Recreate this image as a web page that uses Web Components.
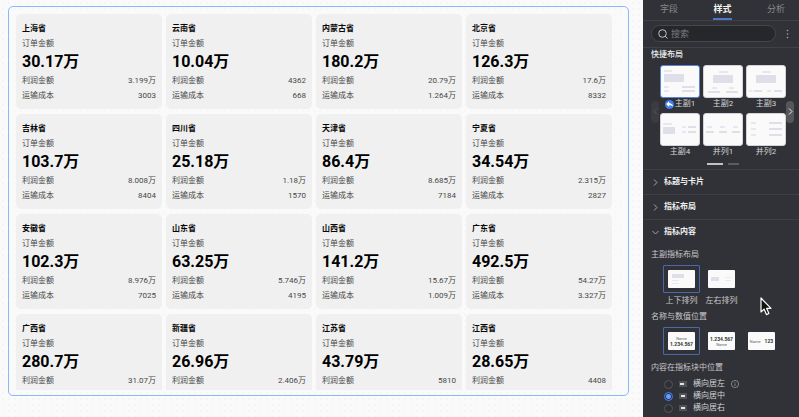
<!DOCTYPE html>
<html lang="zh-CN">
<head>
<meta charset="utf-8">
<meta name="viewport" content="width=device-width, initial-scale=1">
<title>指标卡编辑</title>
<style>
  html, body { margin: 0; height: 100%; }
  body { background: #fafafa; font: 8px/12px Roboto, "Noto Sans CJK SC", sans-serif; overflow: hidden; }
</style>
</head>
<body>
<dashboard-editor></dashboard-editor>

<template id="t-editor">
  <style>
    :host { display: flex; height: 100vh; }
    main { flex: 1; min-width: 0; box-sizing: border-box; padding: 6px 14px 21px 8px;
      background: radial-gradient(circle at 3px 3px, #f5f5f5 0 1px, transparent 1px) 0 0 / 6px 6px #fafafa; }
    side-panel { flex: none; width: 156px; }
    .pointer { position: absolute; left: 760px; top: 297px; width: 12px; height: 19px; }
  </style>
  <main><kpi-board></kpi-board></main>
  <side-panel></side-panel>
  <svg class="pointer" viewBox="0 0 12 19" aria-hidden="true"><path d="M1 1v14l3.1-2.9 2.3 5.5 2.5-1.1-2.3-5.2H11z" fill="#111" stroke="#fff" stroke-width="1.2" stroke-linejoin="round"/></svg>
</template>

<template id="t-board">
  <style>
    :host { display: block; height: 100%; box-sizing: border-box; border: 1px solid #8cb8fb; border-radius: 5px; padding: 7px 16px 5px 7px; background: #fafafa88; }
    .view { height: 100%; overflow: hidden; }
    .grid { display: grid; grid-template-columns: repeat(4, 1fr); grid-auto-rows: 95px; gap: 5px 4px; }
  </style>
  <div class="view"><div class="grid"></div></div>
</template>

<template id="t-card">
  <style>
    :host { display: block; box-sizing: border-box; padding: 8px 6px 6px; border-radius: 5px; background: #f0f0f0; color: #484848; }
    h3, p, dl, dt, dd { margin: 0; }
    h3 { font-size: 8px; line-height: 14px; font-weight: 700; color: #080808; }
    p { line-height: 16px; }
    .total { font-size: 16px; line-height: 20px; font-weight: 700; color: #000; }
    dl { padding-top: 1px; }
    dl div { display: flex; justify-content: space-between; line-height: 15px; }
  </style>
  <h3><slot name="name"></slot></h3>
  <p>订单金额</p>
  <p class="total"><slot name="total"></slot></p>
  <dl>
    <div><dt>利润金额</dt><dd><slot name="profit"></slot></dd></div>
    <div class="cost"><dt>运输成本</dt><dd><slot name="cost"></slot></dd></div>
  </dl>
</template>

<template id="t-tile">
  <style>
    :host { display: block; }
    button { all: unset; display: block; width: 100%; color: #d4d4d6; text-align: center; cursor: pointer; }
    .art { display: block; box-sizing: border-box; height: 33px; border: 1px solid #d4d4d8; border-radius: 3px; background: #fafafa; }
    :host([selected]) .art { border-color: #5a83d6; }
    svg { display: block; width: 100%; height: 100%; }
    .label { display: flex; align-items: center; justify-content: center; gap: 1px; line-height: 12px; white-space: nowrap; }
    .label svg { display: none; width: 9px; height: 9px; }
    :host([selected]) .label svg { display: block; }
  </style>
  <button type="button"><span class="art"></span><span class="label"><svg viewBox="0 0 8 8" aria-hidden="true"><circle cx="4" cy="4" r="4" fill="#3f7df0"/><path d="M1 3.6 3.7 1.2v1.4C6 2.8 7 4 7.2 6 6.200 4.900 5.200 4.700 3.700 4.700v1.500z" fill="#fff"/></svg><slot></slot></span></button>
</template>

<template id="t-option">
  <style>
    :host { display: block; width: 37px; }
    button { all: unset; display: block; width: 100%; text-align: center; color: #c8c8cb; cursor: pointer; }
    .ring { display: block; box-sizing: border-box; height: 28px; padding: 4px; border: 1px solid transparent; border-radius: 1px; }
    :host([selected]) .ring { border-color: #4a68ac; }
    .art { display: flex; flex-direction: column; align-items: center; justify-content: center; height: 18px; border-radius: 1px; background: #fafafa; color: #333; font-size: 5px; line-height: 6px; font-weight: 700; overflow: hidden; }
    .art.row { flex-direction: row; gap: 4px; }
    .art small { font-size: 4px; line-height: 5px; font-weight: 400; color: #666; }
    svg { display: block; width: 100%; height: 100%; }
    .label { display: block; padding-top: 2px; line-height: 12px; white-space: nowrap; }
    :host([plain]) .label { display: none; }
  </style>
  <button type="button"><span class="ring"><span class="art"></span></span><span class="label"><slot></slot></span></button>
</template>

<template id="t-section">
  <style>
    :host { display: block; }
    :host(:not([open])) { border-bottom: 1px solid #3e3f44; }
    button { all: unset; display: flex; align-items: center; gap: 5px; box-sizing: border-box; width: 100%; height: 24px; padding-left: 9px; color: #f0f0f1; font-weight: 700; cursor: pointer; }
    svg { width: 7px; height: 7px; fill: none; stroke: #a4a4a8; }
    :host([open]) svg { transform: rotate(90deg); }
    .body { padding: 5px 8px 0; }
    :host(:not([open])) .body { display: none; }
  </style>
  <button type="button"><svg viewBox="0 0 7 7" aria-hidden="true"><path d="M2 .5 5 3.500 2 6.500"/></svg><slot name="title"></slot></button>
  <div class="body"><slot></slot></div>
</template>

<template id="t-radios">
  <style>
    :host { display: block; padding: 4px 0 0 13px; }
    fieldset { all: unset; display: grid; }
    label { display: grid; grid-template-columns: 9px 8px auto 8px; justify-content: start; align-items: center; column-gap: 6px; height: 12px; color: #d2d2d4; }
    input { appearance: none; box-sizing: border-box; width: 9px; height: 9px; margin: 0; border: 1px solid #55565b; border-radius: 50%; background: #2f3035; }
    input:checked { border-color: #4a80ee; background: radial-gradient(circle, #6b9cff 0 2px, #26324d 3px); }
    svg { display: block; width: 8px; height: 8px; }
  </style>
  <fieldset aria-label="内容在指标块中位置">
    <label><input type="radio" name="align" value="left"><svg viewBox="0 0 8 8"><path fill="#515257" d="M0 1h8v6H0z"/><path fill="#e4e4e6" d="M1 3h4v2H1z"/></svg><span>横向居左</span><svg viewBox="0 0 8 8" fill="none" stroke="#a5a5a9" stroke-width=".7"><circle cx="4" cy="4" r="3.600"/><path d="M4 3.400v2.600M4 1.900v.8"/></svg></label>
    <label><input type="radio" name="align" value="center" checked><svg viewBox="0 0 8 8"><path fill="#515257" d="M0 1h8v6H0z"/><path fill="#e4e4e6" d="M2 3h4v2H2z"/></svg><span>横向居中</span></label>
    <label><input type="radio" name="align" value="right"><svg viewBox="0 0 8 8"><path fill="#515257" d="M0 1h8v6H0z"/><path fill="#e4e4e6" d="M2 3h4v2H2z"/></svg><span>横向居右</span></label>
  </fieldset>
</template>

<template id="t-panel">
  <style>
    :host { display: block; background: #313237; color: #c8c8cb; overflow: hidden; }
    button { all: unset; cursor: pointer; }
    h4 { margin: 0; font-size: 8px; line-height: 12px; font-weight: 400; }
    .tabs { display: flex; justify-content: space-between; padding: 0 14px 0 17px; border-bottom: 1px solid #404146; font-size: 9px; line-height: 14px; color: #88888c; }
    .tabs button { height: 18px; border-bottom: 2px solid transparent; }
    .tabs [aria-selected=true] { color: #f4f4f5; font-weight: 700; border-color: #4d78c8; }
    .search { display: flex; align-items: center; gap: 8px; padding: 4px 8px 5px; border-bottom: 1px solid #404146; }
    .box { display: flex; flex: 1; min-width: 0; align-items: center; gap: 3px; box-sizing: border-box; height: 17px; padding: 0 6px; border: 1px solid #46474b; border-radius: 9px; background: #26272b; }
    .box svg { flex: none; width: 10px; height: 10px; fill: none; stroke: #c4c4c8; }
    input { all: unset; flex: 1; min-width: 0; font-size: 9px; line-height: 14px; }
    input::placeholder { color: #7b7b80; }
    .more svg { display: block; width: 7px; height: 10px; fill: #a6a6aa; }
    .quick { padding: 0 5px 4px 8px; border-bottom: 1px solid #3e3f44; }
    .quick h4 { padding: 1px 0 4px; color: #f0f0f1; font-weight: 500; }
    .carousel { display: flex; align-items: center; }
    .tiles { flex: 1; display: grid; grid-template-columns: repeat(3, 1fr); gap: 3px; padding: 0 0 0 1px; }
    .arrow { display: flex; align-items: center; justify-content: center; width: 8px; height: 22px; border-radius: 4px; background: #3b3c40; }
    .arrow.next { background: #56575b; }
    .arrow svg { width: 5px; height: 7px; fill: none; stroke: #55565a; }
    .arrow.next svg { stroke: #eee; }
    .pages { display: flex; justify-content: center; gap: 5px; padding-top: 5px; }
    .pages button { width: 11px; height: 2px; background: #5c5d61; }
    .pages button:first-child { width: 16px; background: #c2c2c5; }
    .options { display: flex; gap: 3px; padding: 4px 0 4px 12px; }
    .options.wide { padding-bottom: 7px; }
  </style>
  <div class="tabs" role="tablist">
    <button role="tab" aria-selected="false">字段</button><button role="tab" aria-selected="true">样式</button><button role="tab" aria-selected="false">分析</button>
  </div>
  <div class="search">
    <label class="box"><svg viewBox="0 0 10 10" aria-hidden="true"><circle cx="4.500" cy="4.500" r="3.800"/><path d="m7.200 7.200 2.300 2.300"/></svg><input type="text" placeholder="搜索" aria-label="搜索"></label>
    <button class="more" aria-label="更多"><svg viewBox="0 0 7 10"><circle cx="3.500" cy="1.500" r=".8"/><circle cx="3.500" cy="5" r=".8"/><circle cx="3.500" cy="8.500" r=".8"/></svg></button>
  </div>
  <div class="quick">
    <h4>快捷布局</h4>
    <div class="carousel">
      <button class="arrow" aria-label="上一页"><svg viewBox="0 0 5 7"><path d="M4 .5 1 3.500l3 3"/></svg></button>
      <div class="tiles">
        <layout-tile art="a" selected>主副1</layout-tile>
        <layout-tile art="b">主副2</layout-tile>
        <layout-tile art="c">主副3</layout-tile>
        <layout-tile art="d">主副4</layout-tile>
        <layout-tile art="e">并列1</layout-tile>
        <layout-tile art="f">并列2</layout-tile>
      </div>
      <button class="arrow next" aria-label="下一页"><svg viewBox="0 0 5 7"><path d="m1 .5 3 3-3 3"/></svg></button>
    </div>
    <div class="pages"><button aria-label="第1页"></button><button aria-label="第2页"></button></div>
  </div>
  <panel-section><span slot="title">标题与卡片</span></panel-section>
  <panel-section><span slot="title">指标布局</span></panel-section>
  <panel-section open>
    <span slot="title">指标内容</span>
    <h4>主副指标布局</h4>
    <div class="options">
      <option-tile art="stack" selected>上下排列</option-tile>
      <option-tile art="side">左右排列</option-tile>
    </div>
    <h4>名称与数值位置</h4>
    <div class="options wide">
      <option-tile art="above" plain selected></option-tile>
      <option-tile art="below" plain></option-tile>
      <option-tile art="inline" plain></option-tile>
    </div>
    <h4>内容在指标块中位置</h4>
    <align-radios></align-radios>
  </panel-section>
</template>

<script>
  const rects = (size, strong, soft) => {
    const draw = (list, fill) => list.map(([x, y, w, h]) => `<rect x="${x}" y="${y}" width="${w}" height="${h}" rx=".5" fill="${fill}"/>`).join('');
    return `<svg viewBox="0 0 ${size}" preserveAspectRatio="none" aria-hidden="true">${draw(strong, '#dfdfea')}${draw(soft, '#e7e7ee')}</svg>`;
  };
  const tileArt = {
    a: rects('38 31', [[3, 8, 20, 8], [21, 20, 13, 2], [21, 24, 13, 2]], [[3, 4, 8, 2], [3, 20, 5, 2], [3, 24, 5, 2]]),
    b: rects('38 31', [[9, 9, 20, 8], [4, 25, 12, 2], [22, 25, 12, 2]], [[15, 5, 9, 2], [8, 21, 5, 2], [25, 21, 5, 2]]),
    c: rects('38 31', [[9, 9, 20, 8], [7, 24, 8, 2], [27, 24, 8, 2]], [[15, 5, 9, 2], [2, 24, 4, 2], [20, 24, 4, 2]]),
    d: rects('38 31', [[2, 13, 12, 7], [27, 12, 8, 2], [27, 17, 8, 2]], [[2, 9, 9, 2], [21, 12, 4, 2], [21, 17, 4, 2]]),
    e: rects('38 31', [[2, 17, 8, 2], [15, 17, 8, 2], [28, 17, 8, 2]], [[3, 12, 5, 2], [16, 12, 5, 2], [29, 12, 5, 2]]),
    f: rects('38 31', [[22, 8, 13, 2], [22, 14, 13, 2], [22, 20, 13, 2]], [[4, 8, 5, 2], [4, 14, 5, 2], [4, 20, 5, 2]])
  };
  const optionArt = {
    stack: rects('27 18', [[4, 4, 12, 4]], [[4, 10, 7, 1], [4, 13, 7, 1]]),
    side: rects('27 18', [[3, 7, 8, 4]], [[17, 7, 6, 1], [17, 10, 6, 1]]),
    above: '<small>Name</small>1.234.567',
    below: '1.234.567<small>Name</small>',
    inline: '<small>Name</small>123'
  };
  const regions = [
    ['上海省', '30.17万', '3.199万', '3003'], ['云南省', '10.04万', '4362', '668'],
    ['内蒙古省', '180.2万', '20.79万', '1.264万'], ['北京省', '126.3万', '17.6万', '8332'],
    ['吉林省', '103.7万', '8.008万', '8404'], ['四川省', '25.18万', '1.18万', '1570'],
    ['天津省', '86.4万', '8.685万', '7184'], ['宁夏省', '34.54万', '2.315万', '2827'],
    ['安徽省', '102.3万', '8.976万', '7025'], ['山东省', '63.25万', '5.746万', '4195'],
    ['山西省', '141.2万', '15.67万', '1.009万'], ['广东省', '492.5万', '54.27万', '3.327万'],
    ['广西省', '280.7万', '31.07万'], ['新疆省', '26.96万', '2.406万'],
    ['江苏省', '43.79万', '5810'], ['江西省', '28.65万', '4408']
  ];

  class TemplateElement extends HTMLElement {
    constructor() {
      super();
      this.attachShadow({ mode: 'open' }).append(document.getElementById(this.constructor.template).content.cloneNode(true));
    }
  }
  customElements.define('kpi-card', class extends TemplateElement {
    static template = 't-card';
    connectedCallback() {
      if (!this.querySelector('[slot=cost]')) this.shadowRoot.querySelector('.cost').remove();
    }
  });
  customElements.define('kpi-board', class extends TemplateElement {
    static template = 't-board';
    connectedCallback() {
      const keys = ['name', 'total', 'profit', 'cost'];
      this.shadowRoot.querySelector('.grid').innerHTML = regions.map(r =>
        `<kpi-card>${r.map((v, i) => `<span slot="${keys[i]}">${v}</span>`).join('')}</kpi-card>`).join('');
    }
  });
  customElements.define('layout-tile', class extends TemplateElement {
    static template = 't-tile';
    connectedCallback() { this.shadowRoot.querySelector('.art').innerHTML = tileArt[this.getAttribute('art')]; }
  });
  customElements.define('option-tile', class extends TemplateElement {
    static template = 't-option';
    connectedCallback() {
      const kind = this.getAttribute('art'), art = this.shadowRoot.querySelector('.art');
      art.innerHTML = optionArt[kind];
      art.classList.toggle('row', kind === 'inline');
    }
  });
  customElements.define('panel-section', class extends TemplateElement {
    static template = 't-section';
    connectedCallback() {
      this.shadowRoot.querySelector('button').onclick = () => this.toggleAttribute('open');
    }
  });
  customElements.define('align-radios', class extends TemplateElement { static template = 't-radios'; });
  customElements.define('side-panel', class extends TemplateElement { static template = 't-panel'; });
  customElements.define('dashboard-editor', class extends TemplateElement { static template = 't-editor'; });
</script>
</body>
</html>
